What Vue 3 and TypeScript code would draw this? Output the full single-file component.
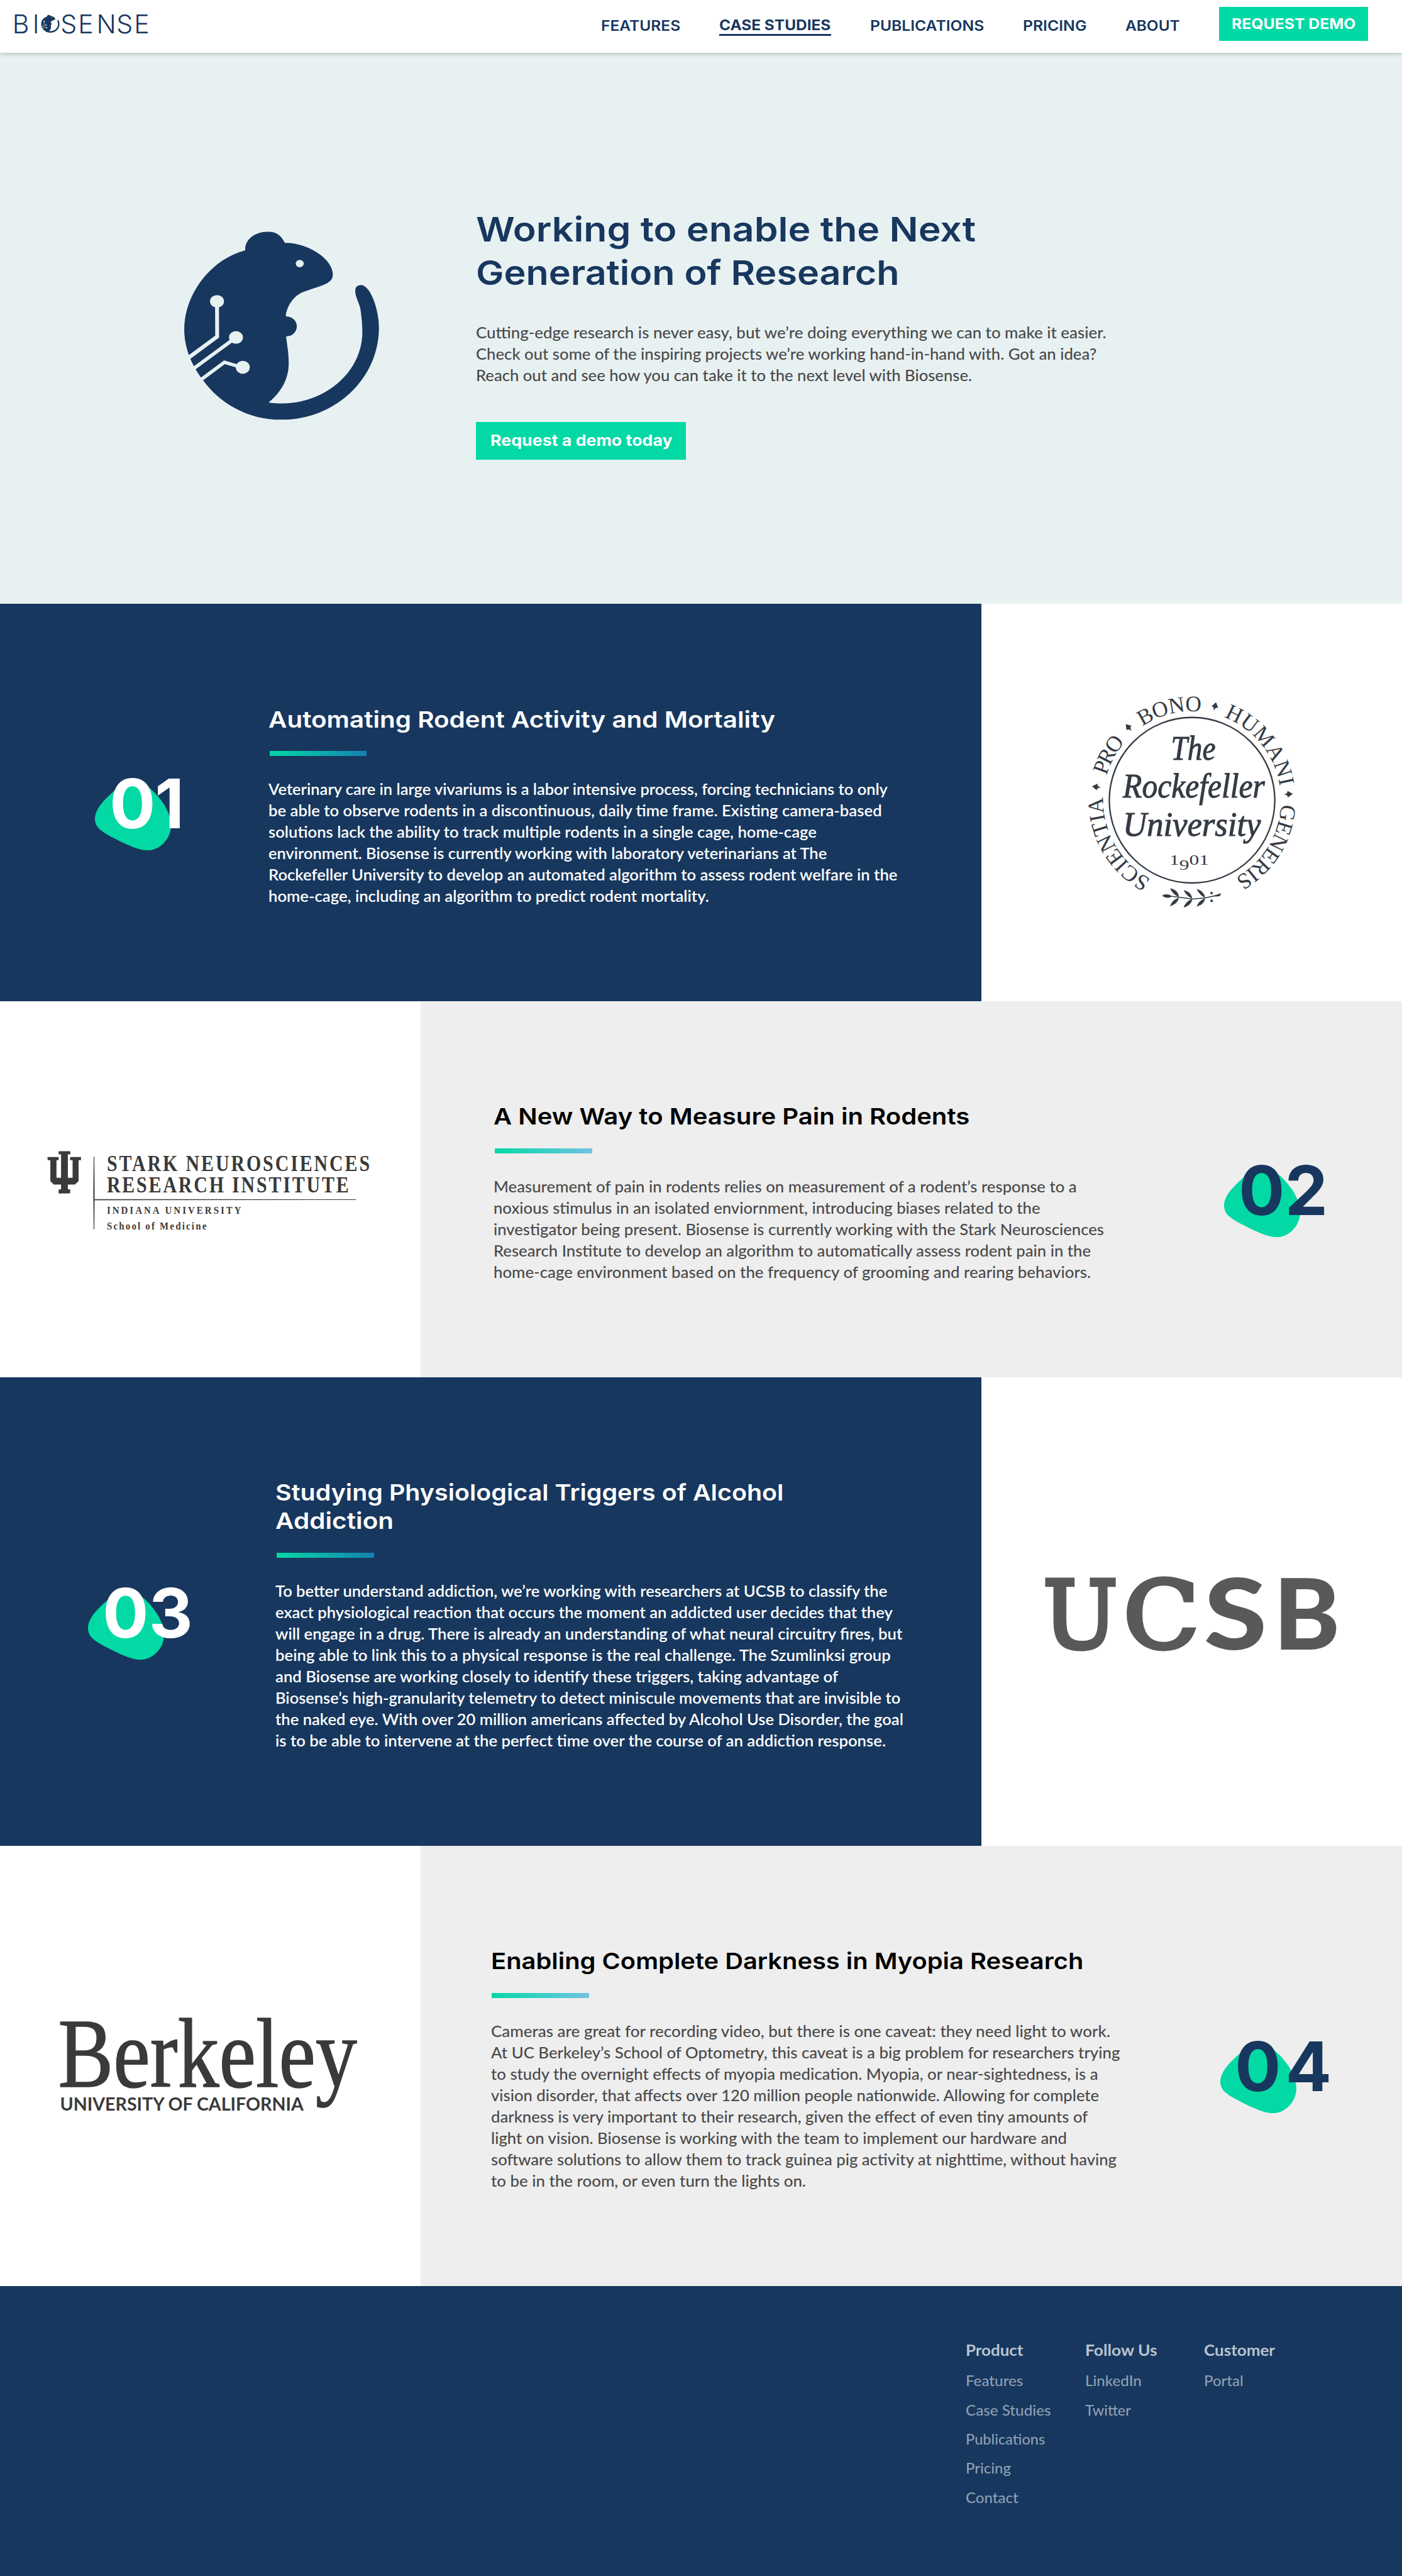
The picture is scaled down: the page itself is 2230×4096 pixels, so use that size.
<script setup lang="ts">
import type { Directive } from 'vue'

interface Line { t: string; w: number }
interface Case {
  id: string
  dark: boolean
  logo: 'rockefeller' | 'stark' | 'ucsb' | 'berkeley'
  second: number
  title: Line[]
  body: Line[]
}

// Sizes are written in hundredths of a rem: 1rem = 100 layout units.
const vFit: Directive<HTMLElement, number> = {
  mounted(el, { value }) {
    const fit = () => {
      el.style.transform = ''
      el.style.marginRight = ''
      const rem = parseFloat(getComputedStyle(document.documentElement).fontSize)
      const natural = el.getBoundingClientRect().width
      const target = (value / 100) * rem
      if (!natural) return
      el.style.transform = `scaleX(${target / natural})`
      el.style.marginRight = `${target - natural}px`
    }
    fit()
    window.addEventListener('load', fit)
  },
}

const nav = [
  { t: 'FEATURES', w: 163 },
  { t: 'CASE STUDIES', w: 229, active: true },
  { t: 'PUBLICATIONS', w: 234 },
  { t: 'PRICING', w: 131 },
  { t: 'ABOUT', w: 112 },
]

const heroTitle: Line[] = [
  { t: 'Working to enable the Next', w: 1027 },
  { t: 'Generation of Research', w: 870 },
]
const heroText: Line[] = [
  { t: 'Cutting-edge research is never easy, but we’re doing everything we can to make it easier.', w: 1295 },
  { t: 'Check out some of the inspiring projects we’re working hand-in-hand with. Got an idea?', w: 1275 },
  { t: 'Reach out and see how you can take it to the next level with Biosense.', w: 1019 },
]

const cases: Case[] = [
  {
    id: '01', dark: true, logo: 'rockefeller', second: 123,
    title: [{ t: 'Automating Rodent Activity and Mortality', w: 1041 }],
    body: [
      { t: 'Veterinary care in large vivariums is a labor intensive process, forcing technicians to only', w: 1272 },
      { t: 'be able to observe rodents in a discontinuous, daily time frame. Existing camera-based', w: 1260 },
      { t: 'solutions lack the ability to track multiple rodents in a single cage, home-cage', w: 1126 },
      { t: 'environment. Biosense is currently working with laboratory veterinarians at The', w: 1147 },
      { t: 'Rockefeller University to develop an automated algorithm to assess rodent welfare in the', w: 1292 },
      { t: 'home-cage, including an algorithm to predict rodent mortality.', w: 905 },
    ],
  },
  {
    id: '02', dark: false, logo: 'stark', second: 125,
    title: [{ t: 'A New Way to Measure Pain in Rodents', w: 978 }],
    body: [
      { t: 'Measurement of pain in rodents relies on measurement of a rodent’s response to a', w: 1198 },
      { t: 'noxious stimulus in an isolated enviornment, introducing biases related to the', w: 1123 },
      { t: 'investigator being present. Biosense is currently working with the Stark Neurosciences', w: 1254 },
      { t: 'Research Institute to develop an algorithm to automatically assess rodent pain in the', w: 1227 },
      { t: 'home-cage environment based on the frequency of grooming and rearing behaviors.', w: 1227 },
    ],
  },
  {
    id: '03', dark: true, logo: 'ucsb', second: 125,
    title: [
      { t: 'Studying Physiological Triggers of Alcohol', w: 1044 },
      { t: 'Addiction', w: 243 },
    ],
    body: [
      { t: 'To better understand addiction, we’re working with researchers at UCSB to classify the', w: 1257 },
      { t: 'exact physiological reaction that occurs the moment an addicted user decides that they', w: 1268 },
      { t: 'will engage in a drug. There is already an understanding of what neural circuitry fires, but', w: 1288 },
      { t: 'being able to link this to a physical response is the real challenge. The Szumlinksi group', w: 1264 },
      { t: 'and Biosense are working closely to identify these triggers, taking advantage of', w: 1156 },
      { t: 'Biosense’s high-granularity telemetry to detect miniscule movements that are invisible to', w: 1284 },
      { t: 'the naked eye. With over 20 million americans affected by Alcohol Use Disorder, the goal', w: 1290 },
      { t: 'is to be able to intervene at the perfect time over the course of an addiction response.', w: 1254 },
    ],
  },
  {
    id: '04', dark: false, logo: 'berkeley', second: 134,
    title: [{ t: 'Enabling Complete Darkness in Myopia Research', w: 1217 }],
    body: [
      { t: 'Cameras are great for recording video, but there is one caveat: they need light to work.', w: 1272 },
      { t: 'At UC Berkeley’s School of Optometry, this caveat is a big problem for researchers trying', w: 1292 },
      { t: 'to study the overnight effects of myopia medication. Myopia, or near-sightedness, is a', w: 1247 },
      { t: 'vision disorder, that affects over 120 million people nationwide. Allowing for complete', w: 1249 },
      { t: 'darkness is very important to their research, given the effect of even tiny amounts of', w: 1226 },
      { t: 'light on vision. Biosense is working with the team to implement our hardware and', w: 1183 },
      { t: 'software solutions to allow them to track guinea pig activity at nighttime, without having', w: 1285 },
      { t: 'to be in the room, or even turn the lights on.', w: 647 },
    ],
  },
]

const footer = [
  {
    head: { t: 'Product', w: 118 },
    links: [
      { t: 'Features', w: 118 }, { t: 'Case Studies', w: 175 }, { t: 'Publications', w: 163 },
      { t: 'Pricing', w: 93 }, { t: 'Contact', w: 108 },
    ],
  },
  { head: { t: 'Follow Us', w: 148 }, links: [{ t: 'LinkedIn', w: 116 }, { t: 'Twitter', w: 94 }] },
  { head: { t: 'Customer', w: 146 }, links: [{ t: 'Portal', w: 81 }] },
]

// Words around the seal: distance along the ring and length.
const ring = [
  { t: 'SCIENTIA', o: 263, l: 617 },
  { t: 'PRO', o: 1014, l: 239 },
  { t: 'BONO', o: 1396, l: 383 },
  { t: 'HUMANI', o: 1922, l: 574 },
  { t: 'GENERIS', o: 2606, l: 560 },
]
const marks = [-82.1, -41.1, 13.75, 86.4]
</script>

<template>
  <div class="page">
    <svg class="defs" aria-hidden="true">
      <symbol id="mouse" viewBox="114 106 1202 1162">
        <path
          fill="currentColor"
          d="M490 222C486 160 545 108 628 108C690 106 715 140 735 177C870 172 1030 275 1030 372C1030 432 950 440 840 482C790 505 745 565 740 629C780 629 808 658 808 690C808 725 780 752 742 753C748 810 758 850 758 920C758 1010 715 1095 634 1160C930 1205 1212 1000 1212 725C1212 680 1205 610 1198 575C1190 540 1168 510 1168 470C1168 450 1180 436 1203 436C1260 436 1314 580 1314 700C1314 1010 1050 1266 712 1266C500 1266 330 1160 230 1023C150 920 114 810 114 710C114 500 270 280 490 222Z"
        />
        <g class="trace">
          <path d="M316 537L317 754L120 899" stroke-width="24" />
          <path d="M432 760L150 967" stroke-width="22" />
          <path d="M475 946L362 912L195 1036" stroke-width="21" />
        </g>
        <g class="node">
          <ellipse cx="316" cy="537" rx="43" ry="39" />
          <ellipse cx="433" cy="759" rx="43" ry="39" />
          <ellipse cx="475" cy="943" rx="43" ry="40" />
          <ellipse cx="826" cy="304" rx="25" ry="23" />
        </g>
      </symbol>
    </svg>

    <header class="nav">
      <svg class="brand" viewBox="0 0 320 80">
        <text y="55" x="6 47.5 105 141 179 220 256">BISENSE</text>
        <use href="#mouse" x="65" y="16" width="38" height="40" />
      </svg>
      <nav class="links">
        <a v-for="n in nav" :key="n.t" class="link" :class="{ active: n.active }"><span v-fit="n.w" class="fit">{{ n.t }}</span></a>
        <a class="cta"><span v-fit="255" class="fit">REQUEST DEMO</span></a>
      </nav>
    </header>

    <section class="hero">
      <svg class="mascot" viewBox="0 0 400.7 387.3"><use href="#mouse" width="400.7" height="387.3" /></svg>
      <div class="pitch">
        <h1><span v-for="l in heroTitle" :key="l.t" v-fit="l.w" class="fit line">{{ l.t }}</span></h1>
        <p class="copy"><span v-for="l in heroText" :key="l.t" v-fit="l.w" class="fit line">{{ l.t }}</span></p>
        <a class="demo"><span v-fit="374" class="fit">Request a demo today</span></a>
      </div>
    </section>

    <section v-for="c in cases" :key="c.id" class="case" :class="[c.dark ? 'dark' : 'light', 'case-' + c.id]">
      <div class="panel">
        <svg class="badge" viewBox="0 -40 240 200">
          <path fill="#02d9a5" d="M0 85C0 65 20 45 37 30C58 10 75 6 90 9C112 15 140 48 149 69C157 85 157 102 155 110C150 132 130 150 108 150C90 150 64 137 49 130C18 114 0 106 0 85Z" />
          <text y="104" :x="'30 ' + c.second">{{ c.id }}</text>
        </svg>
        <div class="story">
          <h2><span v-for="l in c.title" :key="l.t" v-fit="l.w" class="fit line">{{ l.t }}</span></h2>
          <div class="rule"></div>
          <p class="copy"><span v-for="l in c.body" :key="l.t" v-fit="l.w" class="fit line">{{ l.t }}</span></p>
        </div>
      </div>
      <div class="partner">
        <svg v-if="c.logo === 'rockefeller'" class="seal" viewBox="0 0 1500 1500">
          <path id="ring" fill="none" d="M748 1278A548 548 0 0 1 748 182A548 548 0 0 1 748 1278" />
          <circle cx="748" cy="730" r="510" fill="none" stroke="#343b44" stroke-width="9" />
          <text v-for="w in ring" :key="w.t" class="motto">
            <textPath href="#ring" :startOffset="w.o" :textLength="w.l" lengthAdjust="spacing">{{ w.t }}</textPath>
          </text>
          <path v-for="m in marks" :key="m" d="M748 108L769 140Q752 136 748 164Q744 136 727 140Z" :transform="`rotate(${m} 748 730)`" />
          <text class="name" x="618" y="480" textLength="275" lengthAdjust="spacingAndGlyphs">The</text>
          <text class="name" x="322" y="713" textLength="875" lengthAdjust="spacingAndGlyphs">Rockefeller</text>
          <text class="name" x="322" y="948" textLength="850" lengthAdjust="spacingAndGlyphs">University</text>
          <text class="year" y="1127" transform="translate(608 0) scale(1.36 1)" x="0 45 90 135">1<tspan dy="31">9</tspan><tspan dy="-31">0</tspan>1</text>
          <g>
            <path d="M563 1317Q592 1300 628 1322Q592 1342 563 1317Z" />
            <path d="M612 1272Q660 1280 668 1326Q632 1316 612 1272Z" />
            <path d="M612 1383Q624 1345 668 1330Q660 1368 612 1383Z" />
            <path d="M696 1284Q740 1290 750 1336Q715 1322 696 1284Z" />
            <path d="M696 1392Q706 1355 750 1338Q744 1378 696 1392Z" />
            <path d="M776 1277Q822 1288 829 1332Q796 1318 776 1277Z" />
            <path d="M776 1386Q788 1350 829 1334Q824 1372 776 1386Z" />
            <path d="M625 1322L750 1339L829 1332L920 1312" fill="none" stroke="#343b44" stroke-width="6" />
            <path d="M890 1316L926 1302L920 1320L892 1324Z" />
            <circle cx="868" cy="1302" r="8" /><circle cx="869" cy="1350" r="8" />
          </g>
        </svg>
        <svg v-else-if="c.logo === 'stark'" class="stark" viewBox="0 0 740 240">
          <path d="M61 44.5H85V51H80V99H89.7V63H84.5V56.5H107V63H102V106L94.4 113H80V123H85L84.5 131L61 131.5V123H66V113H51L44 106V63H38.5L38 56.5H61V63H56.6V99H66V51H61Z" />
          <path d="M133 56H134.4L135 130L134.4 205H133L132.2 130Z" />
          <path d="M134 142.9L672 143.4V144.6L134 145.2Z" />
          <g transform="translate(160 0) scale(0.86 1)">
            <text class="s1" y="85.7" textLength="628">STARK NEUROSCIENCES</text>
            <text class="s1" y="129.5" textLength="578">RESEARCH INSTITUTE</text>
            <text class="s2" y="173.7" textLength="321">INDIANA UNIVERSITY</text>
            <text class="s2" y="205.5" textLength="238">School of Medicine</text>
          </g>
        </svg>
        <svg v-else-if="c.logo === 'ucsb'" class="ucsb" viewBox="0 0 700 240">
          <text class="slab" x="43" y="184" textLength="153" lengthAdjust="spacingAndGlyphs">U</text>
          <text class="slab" x="208" y="184" textLength="155" lengthAdjust="spacingAndGlyphs">C</text>
          <text class="sans" x="373" y="187" textLength="130" lengthAdjust="spacingAndGlyphs">S</text>
          <text class="sans" x="516" y="187" textLength="137" lengthAdjust="spacingAndGlyphs">B</text>
        </svg>
        <svg v-else class="berkeley" viewBox="0 0 660 240">
          <text class="b1" x="20" y="165" textLength="614" lengthAdjust="spacingAndGlyphs">Berkeley</text>
          <text class="b2" x="24" y="214" textLength="500" lengthAdjust="spacingAndGlyphs">UNIVERSITY OF CALIFORNIA</text>
        </svg>
      </div>
    </section>

    <footer class="foot">
      <div v-for="f in footer" :key="f.head.t" class="col">
        <h3><span v-fit="f.head.w" class="fit">{{ f.head.t }}</span></h3>
        <a v-for="l in f.links" :key="l.t"><span v-fit="l.w" class="fit">{{ l.t }}</span></a>
      </div>
    </footer>
  </div>
</template>

<style>
html {
  font-size: 77.4306px;
}
body {
  margin: 0;
}
</style>

<style scoped>
.page {
  width: 28.8rem;
  height: 52.9rem;
  overflow: hidden;
  background: #fff;
  font-family: Lato, "Open Sans", sans-serif;
}
.defs {
  position: absolute;
  width: 0;
  height: 0;
}
.trace {
  fill: none;
  stroke: var(--under);
}
.node {
  fill: var(--under);
}
.fit {
  display: inline-block;
  width: max-content;
  white-space: nowrap;
  transform-origin: 0 50%;
}
.line {
  display: block;
}
h1, h2, h3, p {
  margin: 0;
}
svg {
  display: block;
  flex: none;
  overflow: visible;
}

.nav {
  position: relative;
  z-index: 1;
  box-sizing: border-box;
  display: flex;
  justify-content: space-between;
  height: 1.08rem;
  padding: 0 0.7rem 0 0.2rem;
  background: #fff;
  box-shadow: 0 0.04rem 0.08rem rgba(0, 0, 0, 0.2);
  color: #17375e;
  font: 600 0.293rem/0.36rem Inter, sans-serif;
}
.brand {
  --under: #fff;
  width: 3.2rem;
  height: 0.8rem;
  margin-top: 0.135rem;
}
.brand text {
  font: 300 53px Inter, sans-serif;
  fill: #17375e;
}
.links {
  display: flex;
  align-items: flex-start;
  gap: 0.81rem;
}
.link {
  margin-top: 0.353rem;
}
.link:first-child {
  margin-right: -0.01rem;
}
.link + .link {
  margin-right: -0.01rem;
}
.link.active {
  margin-top: 0.333rem;
  padding-bottom: 0.007rem;
  border-bottom: 0.04rem solid #17375e;
  font-weight: 700;
}
.cta {
  box-sizing: border-box;
  width: 3.06rem;
  height: 0.7rem;
  margin-top: 0.14rem;
  padding: 0.173rem 0 0 0.26rem;
  background: #02d9a5;
  color: #fff;
  font-weight: 700;
}

.hero {
  display: flex;
  box-sizing: border-box;
  height: 11.32rem;
  padding-left: 3.78rem;
  background: #e8f1f2;
}
.mascot {
  --under: #e8f1f2;
  width: 4.007rem;
  height: 3.873rem;
  margin: 3.673rem 1.993rem 0 0;
  color: #17375e;
}
.pitch {
  padding-top: 3.187rem;
}
h1 {
  color: #17375e;
  font: 600 0.7rem/0.88rem Inter, sans-serif;
}
.copy {
  color: #4a4a4a;
  font-weight: 500;
  font-size: 0.32rem;
  line-height: 0.44rem;
}
.pitch .copy {
  margin-top: 0.58rem;
}
.demo {
  display: block;
  box-sizing: border-box;
  width: 4.31rem;
  height: 0.78rem;
  margin-top: 0.734rem;
  padding: 0.195rem 0 0 0.29rem;
  background: #02d9a5;
  color: #fff;
  font: 700 0.315rem/0.38rem Inter, sans-serif;
}

.case {
  display: flex;
}
.panel {
  display: flex;
  width: 20.16rem;
}
.partner {
  width: 8.64rem;
  background: #fff;
}
.dark .panel {
  background: #17375e;
}
.light {
  flex-direction: row-reverse;
}
.light .panel {
  flex-direction: row-reverse;
  justify-content: space-between;
  background: #eee;
}
.story {
  padding-top: 2.085rem;
}
.story h2, .story .copy {
  margin-left: -0.02rem;
}
h2 {
  color: #000;
  font: 600 0.465rem/0.58rem Inter, sans-serif;
}
.dark h2, .dark .copy {
  color: #fff;
}
.dark .copy {
  font-weight: 600;
}
.rule {
  width: 2rem;
  height: 0.1rem;
  margin: 0.36rem 0 0.466rem;
  background: linear-gradient(90deg, #02d9a5, #1583b0);
}
.light .rule {
  background: linear-gradient(90deg, #02d9a5, #72c3e3);
}
.badge {
  width: 2.4rem;
  height: 2rem;
}
.badge text {
  font: 700 140px Inter, sans-serif;
  fill: #17375e;
}
.dark .badge text {
  fill: #fff;
}
.case-01 { height: 8.16rem; }
.case-02 { height: 7.72rem; }
.case-03 { height: 9.62rem; }
.case-04 { height: 9.04rem; }
.case-01 .badge { margin: 3.16rem 1.18rem 0 1.955rem; }
.case-02 .badge { margin: 2.94rem 1.25rem 0 0; }
.case-03 .badge { margin: 3.905rem 1.47rem 0 1.81rem; }
.case-04 .badge { margin: 3.6rem 1.33rem 0 0; }
.case-02 .story { margin-left: 1.52rem; }
.case-04 .story { margin-left: 1.46rem; }

.seal {
  width: 5rem;
  height: 5rem;
  margin: 1.6rem 0 0 1.84rem;
  fill: #343b44;
}
.motto {
  font: 137px "Liberation Serif", serif;
}
.name {
  font: italic 212px "Liberation Serif", serif;
  stroke: #343b44;
  stroke-width: 4;
}
.year {
  font: 90px "Liberation Serif", serif;
}
.stark {
  width: 7.4rem;
  height: 2.4rem;
  margin: 2.64rem 0 0 0.6rem;
  fill: #3a3a3a;
}
.s1 {
  font: 700 45px "Liberation Serif", serif;
}
.s2 {
  font: 700 22.5px "Liberation Serif", serif;
}
.ucsb {
  width: 7rem;
  height: 2.4rem;
  margin: 3.72rem 0 0 0.84rem;
  fill: #595959;
}
.slab {
  font: 190px "DejaVu Serif", serif;
  stroke: #595959;
  stroke-width: 9;
}
.sans {
  font: 900 203px Lato, sans-serif;
}
.berkeley {
  width: 6.6rem;
  height: 2.4rem;
  margin: 3.3rem 0 0 1rem;
  fill: #3a3a3a;
}
.b1 {
  font: 203px "Liberation Serif", serif;
  stroke: #3a3a3a;
  stroke-width: 2;
}
.b2 {
  font: 700 38px Lato, sans-serif;
}

.foot {
  display: flex;
  box-sizing: border-box;
  height: 5.96rem;
  padding: 1.1rem 0 0 19.84rem;
  background: #17375e;
}
.col {
  display: flex;
  flex-direction: column;
  align-items: flex-start;
  width: 2.446rem;
  color: #8f9fb3;
  font-size: 0.3rem;
  line-height: 0.6rem;
}
.col a {
  display: block;
  height: 0.6rem;
  font-weight: 500;
}
h3 {
  height: 0.547rem;
  color: #b9c3cf;
  font-size: 0.32rem;
  font-weight: 700;
  line-height: 0.44rem;
}
</style>
